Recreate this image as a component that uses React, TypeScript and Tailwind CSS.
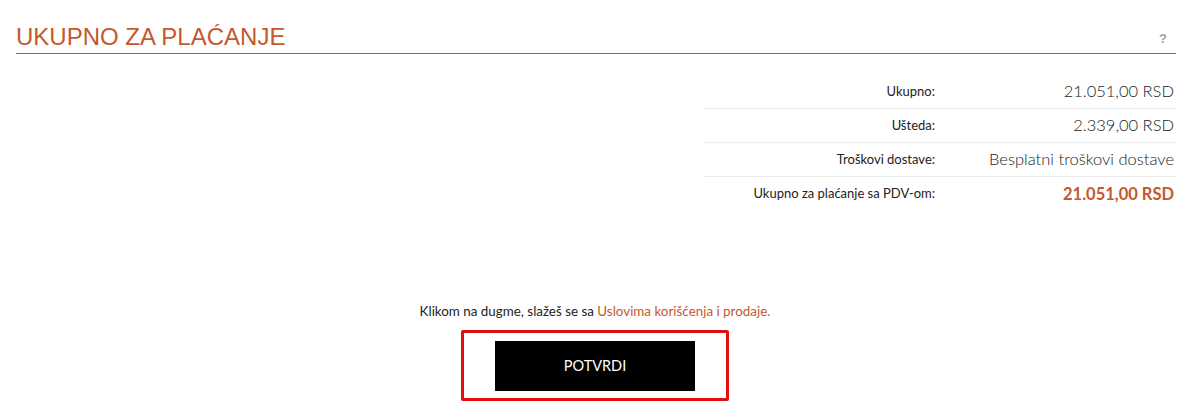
import React from "react";

const rows = [
  { label: "Ukupno:", value: "21.051,00 RSD" },
  { label: "Ušteda:", value: "2.339,00 RSD" },
  { label: "Troškovi dostave:", value: "Besplatni troškovi dostave" },
];

export default function App() {
  return (
    <div className="w-[1200px] h-[403px] bg-white overflow-hidden" style={{ fontFamily: "Lato, 'Open Sans', sans-serif" }}>
      <div className="ml-[16px] mr-[24px] pt-[24px]">
        <div className="flex items-end justify-between pb-[3px]">
          <h1 className="text-[24px] leading-[26px] text-[#c4582e] font-['Liberation_Sans',Arial,sans-serif]">UKUPNO ZA PLAĆANJE</h1>
          <span className="text-[13px] font-bold text-[#a0a0a8] mr-[9px] mb-[2px] font-['Liberation_Sans',Arial,sans-serif]">?</span>
        </div>
        <div className="h-[1px] bg-[#c0552a]" />
        <div className="flex justify-end mt-[21px]">
          <div className="w-[472px]">
            {rows.map((r) => (
              <div key={r.label} className="flex items-center h-[34px] border-b border-b-[#ececec]">
                <div className="w-[231px] text-right text-[13px] text-[#222]">{r.label}</div>
                <div className="flex-1 text-right text-[16.5px] font-light text-[#222] pr-[2px]">{r.value}</div>
              </div>
            ))}
            <div className="flex items-center h-[34px]">
              <div className="w-[231px] text-right text-[13px] text-[#222]">Ukupno za plaćanje sa PDV-om:</div>
              <div className="flex-1 text-right text-[16.5px] font-bold text-[#c4582e] pr-[2px]">21.051,00 RSD</div>
            </div>
          </div>
        </div>
      </div>
      <div className="flex flex-col items-center mt-[90px] mr-[10px]">
        <p className="text-[13.4px] text-[#222]">
          Klikom na dugme, slažeš se sa <span className="text-[#c4582e]">Uslovima korišćenja i prodaje.</span>
        </p>
        <div className="mt-[9px] border-[3px] border-[#e01010] rounded-[2px] w-[268px] h-[71px] flex items-center justify-center">
          <button className="bg-black text-white text-[14.5px] w-[200px] h-[50px]">POTVRDI</button>
        </div>
      </div>
    </div>
  );
}
